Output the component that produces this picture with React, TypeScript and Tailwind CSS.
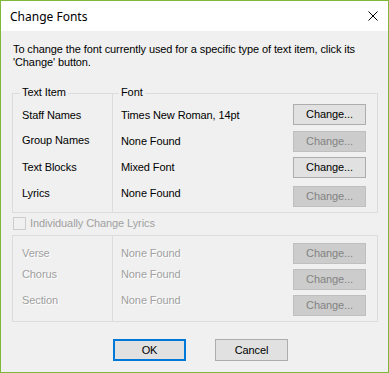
import React from "react";

const FONT = { fontFamily: '"Liberation Sans", Arial, sans-serif' };

function Btn({ label, disabled }: { label: string; disabled?: boolean }) {
  return (
    <div
      className={
        "w-[73px] h-[21px] flex items-center justify-center border text-[11px] leading-[13px] " +
        (disabled
          ? "bg-[#cccccc] border-[#bfbfbf] text-[#838383]"
          : "bg-[#e1e1e1] border-[#adadad] text-black")
      }
    >
      {label}
    </div>
  );
}

function CloseIcon() {
  return (
    <svg width="10" height="10" viewBox="0 0 10 10" className="block">
      <path d="M0.5 0.5 L9.5 9.5 M9.5 0.5 L0.5 9.5" stroke="#000" strokeWidth="1" fill="none" />
    </svg>
  );
}

const dis = "text-[#a0a0a0] [text-shadow:1px_1px_0_#ffffff]";

export default function App() {
  return (
    <div
      className="w-[389px] h-[373px] border border-[#7db83a] bg-[#f0f0f0] flex flex-col text-[11px] leading-[13px] tracking-[-0.1px] text-black overflow-hidden"
      style={FONT}
    >
      {/* Title bar */}
      <div className="h-[30px] bg-white flex items-center justify-between pl-[9px] pr-[10px] shrink-0">
        <span className="text-[12px] tracking-normal text-black" style={{ fontFamily: '"Noto Sans", "Open Sans", sans-serif' }}>
          Change Fonts
        </span>
        <CloseIcon />
      </div>

      {/* Body */}
      <div className="flex flex-col pl-[11px]">
        <p className="mt-[12px] ml-[1px] w-[350px]">
          To change the font currently used for a specific type of text item, click its 'Change' button.
        </p>

        {/* Group box 1 */}
        <div className="relative mt-[24px] w-[366px] h-[120px] border border-[#dcdcdc] flex">
          <div className="w-[99px] flex flex-col pl-[9px]">
            <span className="absolute left-[7px] top-[-8px] px-[2px] bg-[#f0f0f0]">Text Item</span>
            <span className="mt-[15px]">Staff Names</span>
            <span className="mt-[12px]">Group Names</span>
            <span className="mt-[14px]">Text Blocks</span>
            <span className="mt-[13px]">Lyrics</span>
          </div>
          <div className="relative flex-1 border-l border-[#dcdcdc] flex">
            <span className="absolute left-[6px] top-[-8px] px-[2px] bg-[#f0f0f0]">Font</span>
            <div className="flex-1 flex flex-col pl-[8px]">
              <span className="mt-[15px]">Times New Roman, 14pt</span>
              <span className="mt-[13px]">None Found</span>
              <span className="mt-[13px]">Mixed Font</span>
              <span className="mt-[13px]">None Found</span>
            </div>
            <div className="flex flex-col mr-[11px]">
              <div className="mt-[10px]"><Btn label="Change..." /></div>
              <div className="mt-[6px]"><Btn label="Change..." disabled /></div>
              <div className="mt-[5px]"><Btn label="Change..." /></div>
              <div className="mt-[8px]"><Btn label="Change..." disabled /></div>
            </div>
          </div>
        </div>

        {/* Checkbox */}
        <div className="mt-[4px] ml-[1px] flex items-center h-[13px]">
          <div className="w-[13px] h-[13px] border border-[#cccccc] bg-[#f0f0f0] shrink-0" />
          <span className="ml-[4px] text-[#a0a0a0]">Individually Change Lyrics</span>
        </div>

        {/* Group box 2 */}
        <div className="mt-[5px] w-[366px] h-[87px] border border-[#dcdcdc] flex">
          <div className={"w-[99px] flex flex-col pl-[9px] " + dis}>
            <span className="mt-[11px]">Verse</span>
            <span className="mt-[8px]">Chorus</span>
            <span className="mt-[13px]">Section</span>
          </div>
          <div className="flex-1 border-l border-[#dcdcdc] flex">
            <div className={"flex-1 flex flex-col pl-[8px] " + dis}>
              <span className="mt-[11px]">None Found</span>
              <span className="mt-[8px]">None Found</span>
              <span className="mt-[13px]">None Found</span>
            </div>
            <div className="flex flex-col mr-[11px]">
              <div className="mt-[7px]"><Btn label="Change..." disabled /></div>
              <div className="mt-[5px]"><Btn label="Change..." disabled /></div>
              <div className="mt-[5px]"><Btn label="Change..." disabled /></div>
            </div>
          </div>
        </div>

        {/* Bottom buttons */}
        <div className="mt-[17px] flex ml-[101px]">
          <div className="w-[73px] h-[22px] flex items-center justify-center border-2 border-[#0078d7] bg-[#e1e1e1]">
            OK
          </div>
          <div className="ml-[29px] w-[73px] h-[22px] flex items-center justify-center border border-[#adadad] bg-[#e1e1e1]">
            Cancel
          </div>
        </div>
      </div>
    </div>
  );
}
